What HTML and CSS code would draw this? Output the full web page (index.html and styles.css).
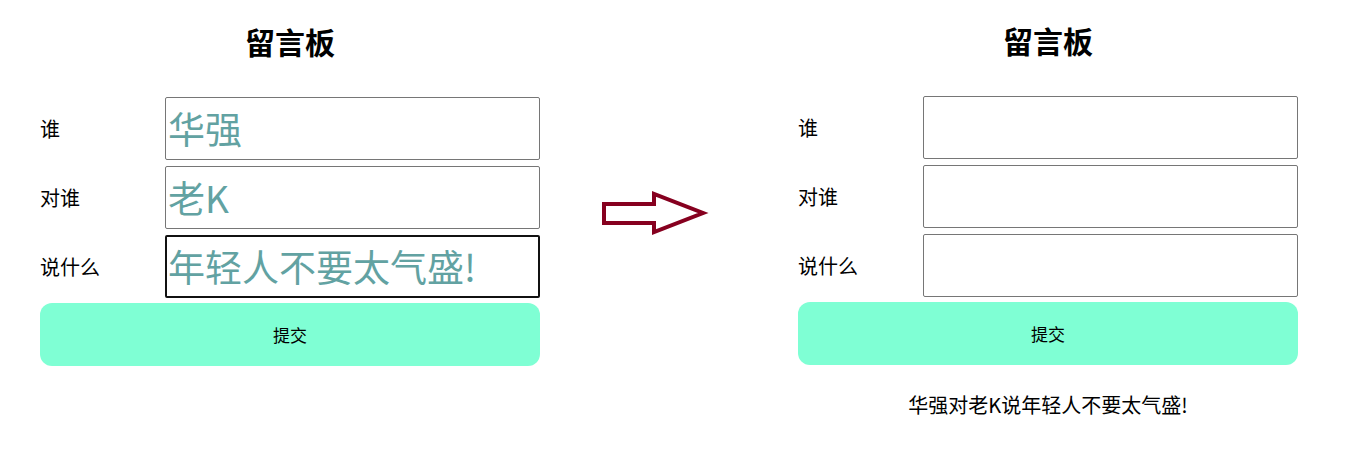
FILE: index.html
```html
<!DOCTYPE html>
<html lang="zh">
<head>
<meta charset="utf-8">
<title>留言板</title>
<link rel="stylesheet" href="styles.css">
</head>
<body>
<div class="stage">
  <section class="board">
    <h2 class="title">留言板</h2>
    <div class="form">
      <div class="row"><span class="label">谁</span><div class="field">华强</div></div>
      <div class="row"><span class="label">对谁</span><div class="field">老K</div></div>
      <div class="row"><span class="label">说什么</span><div class="field field--active">年轻人不要太气盛!</div></div>
      <button class="submit" type="button">提交</button>
    </div>
  </section>
  <svg class="arrow" width="258" height="453" viewBox="0 0 258 453">
    <polygon points="64,204 114,204 114,194 163,213 114,232 114,223 64,223" fill="none" stroke="#86001f" stroke-width="4" stroke-linejoin="miter"/>
  </svg>
  <section class="board board--after">
    <h2 class="title">留言板</h2>
    <div class="form">
      <div class="row"><span class="label">谁</span><div class="field"></div></div>
      <div class="row"><span class="label">对谁</span><div class="field"></div></div>
      <div class="row"><span class="label">说什么</span><div class="field"></div></div>
      <button class="submit" type="button">提交</button>
    </div>
    <p class="result">华强对老K说年轻人不要太气盛!</p>
  </section>
</div>
</body>
</html>
```
FILE: styles.css
```css
html, body {
  margin: 0;
  padding: 0;
  background: #ffffff;
}
body {
  font-family: "Noto Sans CJK SC", "Noto Sans", sans-serif;
  color: #000;
  width: 1355px;
  height: 453px;
  overflow: hidden;
}
.stage {
  display: flex;
  align-items: flex-start;
  padding-left: 40px;
}
.board {
  width: 500px;
  flex: none;
}
.board--after {
  margin-top: -1px;
}
.arrow {
  flex: none;
  display: block;
}
.title {
  margin: 0;
  padding-top: 21px;
  height: 40px;
  line-height: 40px;
  margin-bottom: 36px;
  text-align: center;
  font-size: 30px;
  font-weight: 700;
}
.form {
  display: flex;
  flex-direction: column;
  gap: 6px;
}
.row {
  display: flex;
  align-items: center;
  height: 63px;
}
.label {
  width: 125px;
  flex: none;
  font-size: 20px;
  line-height: 24px;
}
.field {
  box-sizing: border-box;
  width: 375px;
  height: 63px;
  border: 1px solid #767676;
  border-radius: 2px;
  padding: 0 2px;
  font-size: 37px;
  line-height: 61px;
  color: #62a2a2;
  white-space: nowrap;
  overflow: hidden;
}
.field--active {
  border: 2px solid #111;
  padding: 0 1px;
  line-height: 59px;
}
.submit {
  box-sizing: border-box;
  width: 500px;
  height: 63px;
  margin-top: -1px;
  border: none;
  border-radius: 12px;
  background: #7fffd4;
  font-family: inherit;
  font-size: 17px;
  color: #000;
  padding: 0;
}
.result {
  margin: 26px 0 0;
  text-align: center;
  font-size: 20px;
  line-height: 28px;
}
```
